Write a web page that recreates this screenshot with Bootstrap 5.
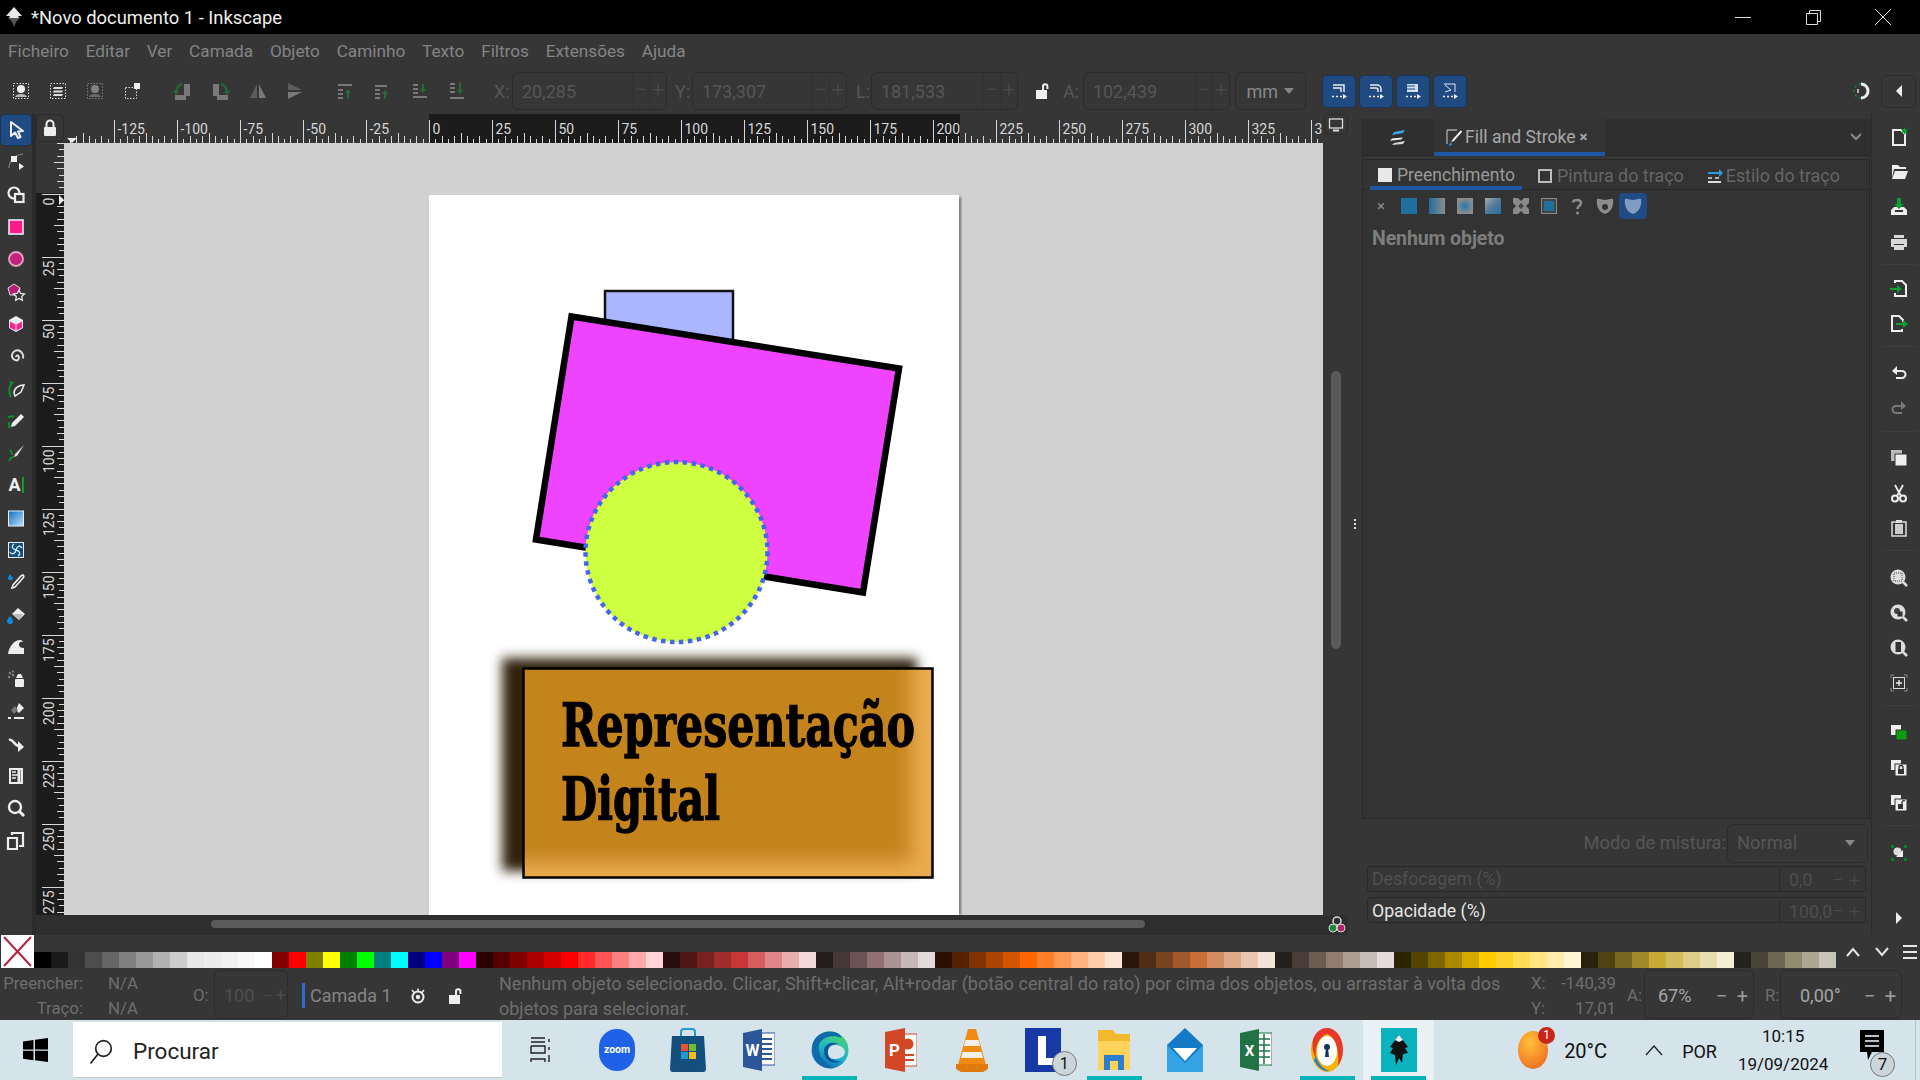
<!DOCTYPE html>
<html lang="pt">
<head>
<meta charset="utf-8">
<title>Inkscape</title>
<link href="https://cdn.jsdelivr.net/npm/bootstrap@5.3.0/dist/css/bootstrap.min.css" rel="stylesheet">
<style>
html,body{margin:0;height:1080px;width:1920px;overflow:hidden}
body{font-family:Roboto,"Liberation Sans",sans-serif;font-size:16px;background:#363636;color:#8a8a8a}
svg{display:block;flex:none}
.ic{width:20px;height:20px}
.titlebar{height:34px;background:#000;color:#eee;padding-left:4px}
.titlebar .logo{width:20px;height:22px;margin-right:7px}
.ttl{font-size:18.4px;padding-top:1px}
.winctl{width:70px;display:flex;justify-content:center}
.winbox{padding-right:2px}
.menubar{height:34px;padding:3px 0 0 8px;gap:16.8px;font-size:17.2px;color:#848484;border-bottom:1px solid #333}
.toolbar{height:46px;padding-left:2px;color:#565656}
.tslot{width:37.4px;display:flex;justify-content:center}
.gp{margin-left:12.6px}
.dim{opacity:.4}
.spinb{display:flex;align-items:center;border:1px solid #2b2b2b;border-radius:6px;height:38px;padding-left:9px;color:#565656;font-size:18px;position:relative}
.spinb .v{flex:1}
.spinb .pm{display:flex;height:100%;align-items:center;color:#4b4b4b;font-size:22px;font-weight:300}
.spinb .pm span{width:17px;text-align:center;border-left:1px solid #313131;height:100%;line-height:34px}
.lb{font-size:18px}
.ml-x{margin-left:18px;width:18px}
.w155{width:155px}.w147{width:147px}.w155b{width:155px}.w147b{width:147px}
.ml-y{margin-left:8px;width:17px}
.ml-l{margin-left:9px;width:15px}
.w71{width:71px;margin-left:5px;justify-content:center;padding:0;gap:6px;color:#888;font-size:18px}
.caretd{width:0;height:0;border-left:5px solid transparent;border-right:5px solid transparent;border-top:6px solid #888}
.lockslot{width:20px;margin-left:14px;margin-right:11px}
.ml-a{width:20px}
.bluebtn{width:34px;height:33px;background:#1f4a82;border:1px solid #183458;border-radius:5px;display:flex;align-items:center;justify-content:center;margin-right:3px}
.bluefirst{margin-left:16px}
.snap{margin-left:auto;margin-right:10px}
.caretbtn{width:35px;height:33px;border:1px solid #2b2b2b;border-radius:5px;display:flex;align-items:center;justify-content:center;margin-right:4px}
.workspace{height:821px}
.toolbox{width:32px}
.tbi{height:32.3px;display:flex;align-items:center;justify-content:center;position:relative}
.tbi-on{background:#1f4a82;border-radius:5px;border:1px solid #183458}
.tbA{color:#eee;font-weight:700;font-size:18px;line-height:20px}
.tbAbar{width:2px;height:16px;background:#0d9c2e;margin-left:1px}
.vsep{width:4px;background:#2b2b2b}
.canvascol{width:1312px;display:flex;flex-direction:column}
.rulertop{height:29px;position:relative}
.lockbtn{width:28px;height:28px;border:1px solid #2b2b2b;border-radius:5px;display:flex;align-items:center;justify-content:center}
.canvasrow{height:772px}
.hbar{height:20px;background:#2e2e2e;position:relative}
.hthumb{position:absolute;left:175px;top:5px;width:934px;height:8px;background:#5a5a5a;border-radius:4px}
.cm{position:absolute;right:1px;top:0}
.rightgut{width:25px;position:relative}
.vthumb{width:10px;height:278px;background:#5a5a5a;border-radius:5px;margin:228px 0 0 8px}
.desk{position:absolute;left:1288px;top:0;width:24px;height:21px;background:#363636;border:1px solid #2b2b2b;border-radius:4px;display:flex;align-items:center;justify-content:center}
.midgut{width:13px;display:flex;justify-content:center;padding-top:388px;color:#ddd}
.grip{display:flex;flex-direction:column;gap:2px;margin-top:17px}
.grip i{display:block;width:2px;height:2px;background:#ddd}
.dock{width:510px;padding-top:5px}
.docktabs{height:37px;background:#2f2f2f;border-bottom:1px solid #262626}
.dtab1{width:73px;display:flex;justify-content:center;align-items:center}
.dtab2{width:171px;display:flex;align-items:center;gap:1px;padding:3px 0 0 10px;background:#343434;border-bottom:4px solid #1f55a5;color:#a8a8a8;font-size:17.6px;margin-bottom:-1px}
.dx{font-size:15px;font-weight:700;margin-left:3px;color:#aaa}
.chev{margin-left:auto;margin-right:8px}
.nbk{height:660px;margin:3px 1px 0 1px;border:1px solid #282828;background:#333}
.subtabs{height:30px;border-bottom:1px solid #282828;padding-left:7px;font-size:17.9px;color:#666}
.stab{display:flex;align-items:center;gap:5px;height:30px;margin-right:21px;padding-top:2px}
.stab-on{width:152px;padding-left:8px;border-bottom:4px solid #1f55a5;color:#9a9a9a;margin-right:16px;font-size:17.5px;padding-top:4px}
.stab-s{gap:1px}
.sq{width:14px;height:14px;flex:none}
.sq-fill{background:#e8e8e8}
.sq-line{border:2px solid #bbb}
.paintrow{height:26px;margin-top:3px;padding-left:4px}
.pb{width:28px;height:26px;display:flex;align-items:center;justify-content:center;border-radius:4px;font-size:15px}
.pb-on{background:#1f4a82}
.pb .sw{width:16px;height:16px;display:block}
.pw1{background:#1f6f9f}
.none-lbl{margin:8px 0 0 9px;font-weight:700;color:#7d7d7d;font-size:19.5px;line-height:24px;letter-spacing:-.1px}
.blendrow{height:39px;margin:4px 3px 0 0;color:#565656;font-size:18.3px;justify-content:flex-end;padding-top:1px}
.sel{width:141px;height:39px;border:1px solid #2b2b2b;border-radius:6px;margin-left:1px;padding:0 12px 0 9px;display:flex;align-items:center;justify-content:space-between}
.scale{height:26px;margin:4px 5px 0 6px;border:1px solid #282828;border-radius:3px;display:flex;align-items:center;padding:1px 0 0 4px;font-size:17.7px;color:#505050}
.scale-w{color:#e6e6e6;margin-top:5px;padding-top:2px}
.scale .nm{width:407px}
.scale .vl{width:50px;padding-left:9px;border-left:1px solid #282828;height:100%;line-height:24px;color:#4e4e4e}
.scale .pm2{color:#4a4a4a;font-size:20px;display:flex;font-weight:300}
.scale .pm2 span{width:17px;text-align:center;line-height:24px}
.cmdbar{width:49px;padding:5.5px 0 0 5px;display:flex;flex-direction:column;align-items:center;border-left:1px solid #2c2c2c}
.cbi{height:35px;display:flex;align-items:center;justify-content:center}
.cbsep{height:15px;width:36px;position:relative}
.cbsep-s{height:11.3px}
.cbsep::after{content:"";position:absolute;left:0;right:0;top:5px;border-top:1px solid #3e3e3e}
.cbcaret{margin-top:30px}
.palette{height:33px;align-items:flex-end}
.nocol{width:33px;height:33px;margin-left:1px;flex:none}
.swatches{display:flex}
.swatch{width:17px;height:16px}
.palctl{margin-left:auto;display:flex;align-items:center;gap:13px;height:33px;padding-right:3px;align-self:flex-end}
.status{height:52px;color:#6e6e6e;font-size:16.8px;padding-top:3px}
.two{height:50px;line-height:25px}
.fillb{width:160px}
.fillb .rowf{display:flex}
.fillb b{font-weight:400;width:83px;text-align:right;margin-right:25px}
.olab{margin-left:33px;width:21px}
.ospin{width:74px;height:49px;margin-top:-3px;border:1px solid #2b2b2b;border-radius:6px;display:flex;align-items:center;padding:3px 0 0 9px;color:#505050;font-size:18px}
.ospin .pm3{display:flex;color:#4a4a4a;font-size:18px}
.ospin .pm3 span{width:13px;text-align:center}
.ospin .vv{flex:1}
.laybar{width:3px;height:25px;background:#2f6bd1;margin-left:14px}
.laynm{margin-left:5px;width:79px;color:#858585;font-size:18px;white-space:nowrap}
.eyes{margin-left:19px}
.lock2{margin-left:17px}
.msg{margin-left:34px;width:1010px;white-space:nowrap;font-size:18px}
.xy{margin-left:22px;width:85px}
.xy .rowf{display:flex;justify-content:space-between}
.alab{margin-left:11px;width:17px}
.zspin{width:110px;height:49px;margin-top:-3px;border:1px solid #2b2b2b;border-radius:6px;display:flex;align-items:center;padding:3px 0 0 13px;color:#a6a6a6;font-size:18px}
.zspin .vv{flex:1}
.zspin .pm3{display:flex;color:#9a9a9a;font-size:20px}
.zspin .pm3 span{width:21px;text-align:center}
.rlab{margin-left:11px;width:15px}
.rspin{width:122px;padding-left:19px}
.taskbar{height:60px;background:#d5e3eb;color:#111;padding-left:23px;position:relative}
.srch{width:429px;height:56px;background:#fff;margin-left:25px;display:flex;align-items:center;padding:5px 0 0 16px;gap:20px;font-size:22.5px;color:#222;border-bottom:1px solid #c9c9c9}
.tview{margin-left:22px;width:36px;display:flex;justify-content:center}
.slots{display:flex;margin-left:21px}
.tk{width:71.1px;height:60px;display:flex;align-items:center;justify-content:center;position:relative}
.tk-line::after{content:"";position:absolute;left:8px;right:8px;bottom:0;height:4px;background:#06b3b6}
.tk-on{background:#e9f1f5}
.wth{margin-left:84px;position:relative;width:34px;height:40px}
.wthb{position:absolute;right:-3px;top:-3px;width:17px;height:17px;border-radius:50%;background:#c9261a;color:#fff;font-size:12px;text-align:center;line-height:17px}
.temp{margin-left:12px;width:43px;font-size:20px;white-space:nowrap;padding-top:2px}
.upc{margin-left:37px}
.por{margin-left:18px;width:36px;font-size:18px;padding-top:2px}
.clk{margin-left:15px;width:100px;text-align:center;font-size:17px;line-height:28px}
.ntf{margin-left:20px;width:38px;height:50px;position:relative;display:flex;justify-content:center;padding-top:5px}
.cnt{position:absolute;width:25px;height:25px;border-radius:50%;border:1px solid #777;background:#ccd5da;color:#111;text-align:center;line-height:23px;font-size:17px;right:-4px;bottom:-2px}
.cntL{right:2px;bottom:4px;font-size:16px}
.edge{position:absolute;right:4px;top:0;bottom:0;border-left:1px solid #b5c3cb}
</style>
</head>
<body class="d-flex flex-column">

<div class="titlebar d-flex align-items-center">
  <svg class="logo" viewBox="0 0 20 22"><path d="M10 1 L2 10 H6 L5 12 H15 L14 10 H18 Z" fill="#e8e8e8"/><path d="M4 12 H16 L12 16 L10 21 L8 16 Z" fill="#555"/></svg>
  <span class="ttl">*Novo documento 1 - Inkscape</span>
  <div class="ms-auto d-flex winbox">
    <div class="winctl"><svg class="ic" viewBox="0 0 20 20"><path d="M2 10.5H18" stroke="#ddd"/></svg></div>
    <div class="winctl"><svg class="ic" viewBox="0 0 20 20"><path d="M3.5 6.5H14.5V17.5H3.5Z M6.5 6V3.5H17.5V14.5H15" fill="none" stroke="#ddd"/></svg></div>
    <div class="winctl"><svg class="ic" viewBox="0 0 20 20"><path d="M2 2 18 18M18 2 2 18" stroke="#ddd"/></svg></div>
  </div>
</div>

<nav class="menubar d-flex align-items-center">
  <span>Ficheiro</span><span>Editar</span><span>Ver</span><span>Camada</span><span>Objeto</span><span>Caminho</span><span>Texto</span><span>Filtros</span><span>Extensões</span><span>Ajuda</span>
</nav>

<div class="toolbar d-flex align-items-center">
  <div class="tslot"><svg class="ic" viewBox="0 0 20 20"><rect x="2.5" y="2.5" width="15" height="15" fill="none" stroke="#ddd" stroke-dasharray="1.5 1.5"/><circle cx="10" cy="8" r="4" fill="#eee"/><path d="M4 16c1-4 11-4 12 0z" fill="#bbb"/></svg></div>
  <div class="tslot"><svg class="ic" viewBox="0 0 20 20"><rect x="2.5" y="2.5" width="15" height="15" fill="none" stroke="#ddd" stroke-dasharray="1.5 1.5"/><path d="M6 6H15L14 8H5ZM6 9.5H15L14 11.5H5ZM6 13H15L14 15H5Z" fill="#ddd"/></svg></div>
  <div class="tslot dim"><svg class="ic" viewBox="0 0 20 20"><rect x="2.5" y="2.5" width="15" height="15" fill="none" stroke="#ddd" stroke-dasharray="1.5 1.5"/><circle cx="10" cy="8" r="4" fill="#eee"/><path d="M4 16c1-4 11-4 12 0z" fill="#bbb"/></svg></div>
  <div class="tslot"><svg class="ic" viewBox="0 0 20 20"><rect x="2.5" y="6.5" width="11" height="11" fill="none" stroke="#ddd" stroke-dasharray="1.5 1.5"/><rect x="11" y="2" width="6" height="6" fill="#eee"/></svg></div>
  <div class="tslot gp dim"><svg class="ic" viewBox="0 0 20 20"><rect x="11" y="3" width="6" height="12" fill="#ddd"/><rect x="2" y="14" width="11" height="5" fill="#ddd"/><path d="M9 3C5 4 3 7 3 12" fill="none" stroke="#0fbe3a" stroke-width="2"/><path d="M0 10h6l-3 4z" fill="#0fbe3a"/></svg></div>
  <div class="tslot dim"><svg class="ic" viewBox="0 0 20 20"><rect x="3" y="3" width="6" height="12" fill="#ddd"/><rect x="7" y="14" width="11" height="5" fill="#ddd"/><path d="M11 3C15 4 17 7 17 12" fill="none" stroke="#0fbe3a" stroke-width="2"/><path d="M14 10h6l-3 4z" fill="#0fbe3a"/></svg></div>
  <div class="tslot dim"><svg class="ic" viewBox="0 0 20 20"><path d="M9 3V17H2Z" fill="#999"/><path d="M11 3V17H18Z" fill="#ddd"/></svg></div>
  <div class="tslot dim"><svg class="ic" viewBox="0 0 20 20"><path d="M3 2 17 9H3Z" fill="#999"/><path d="M3 11H17L3 18Z" fill="#ddd"/></svg></div>
  <div class="tslot gp dim"><svg class="ic" viewBox="0 0 20 20"><path d="M3 3H17V5H3ZM3 8H8V10H3ZM3 12H8V14H3ZM3 16H8V18H3Z" fill="#ddd"/><path d="M13 8l3 4h-2v6h-2v-6h-2z" fill="#0fbe3a"/></svg></div>
  <div class="tslot dim"><svg class="ic" viewBox="0 0 20 20"><path d="M3 4H15V6H3ZM3 8H8V10H3ZM3 12H8V14H3ZM3 16H8V18H3Z" fill="#ddd"/><path d="M13 9l3 4h-2v5h-2v-5h-2z" fill="#0fbe3a"/></svg></div>
  <div class="tslot dim"><svg class="ic" viewBox="0 0 20 20"><path d="M3 3H8V5H3ZM3 7H8V9H3ZM3 11H8V13H3ZM3 15H17V17H3Z" fill="#ddd"/><path d="M12 3h2v5h2l-3 4-3-4h2z" fill="#0fbe3a"/></svg></div>
  <div class="tslot dim"><svg class="ic" viewBox="0 0 20 20"><path d="M3 2H8V4H3ZM3 6H8V8H3ZM3 10H8V12H3ZM3 16H17V18H3Z" fill="#ddd"/><path d="M12 2h2v7h2l-3 4-3-4h2z" fill="#0fbe3a"/></svg></div>

  <span class="lb ml-x">X:</span>
  <div class="spinb w155"><span class="v">20,285</span><span class="pm"><span>−</span><span>+</span></span></div>
  <span class="lb ml-y">Y:</span>
  <div class="spinb w155b"><span class="v">173,307</span><span class="pm"><span>−</span><span>+</span></span></div>
  <span class="lb ml-l">L:</span>
  <div class="spinb w147"><span class="v">181,533</span><span class="pm"><span>−</span><span>+</span></span></div>
  <div class="lockslot"><svg class="ic" viewBox="0 0 20 20"><rect x="4" y="9" width="11" height="9" fill="#eee"/><path d="M11 9V5.5a2.2 2.2 0 0 1 4.4 0V8" fill="none" stroke="#eee" stroke-width="2"/></svg></div>
  <span class="lb ml-a">A:</span>
  <div class="spinb w147b"><span class="v">102,439</span><span class="pm"><span>−</span><span>+</span></span></div>
  <div class="spinb w71"><span>mm</span><span class="caretd"></span></div>
  <div class="bluebtn bluefirst"><svg class="ic" viewBox="0 0 20 20"><path d="M4 4H15V11M4 7H12V11" fill="none" stroke="#eee" stroke-width="1.5"/><path d="M3 15.5H5M7 15.5H9M11 15.5H13" stroke="#eee" stroke-width="1.4"/><path d="M14 13l4 2.5-4 2.5z" fill="#eee"/></svg></div>
  <div class="bluebtn"><svg class="ic" viewBox="0 0 20 20"><path d="M4 4H11A4 4 0 0 1 15 8V11M4 7H10A2 2 0 0 1 12 9V11" fill="none" stroke="#eee" stroke-width="1.5"/><path d="M3 15.5H5M7 15.5H9M11 15.5H13" stroke="#eee" stroke-width="1.4"/><path d="M14 13l4 2.5-4 2.5z" fill="#eee"/></svg></div>
  <div class="bluebtn"><svg class="ic" viewBox="0 0 20 20"><rect x="4" y="3" width="11" height="8" fill="#cfe0f5"/><path d="M4 5H12M4 8H12" stroke="#1f4a82"/><path d="M3 15.5H5M7 15.5H9M11 15.5H13" stroke="#eee" stroke-width="1.4"/><path d="M14 13l4 2.5-4 2.5z" fill="#eee"/></svg></div>
  <div class="bluebtn"><svg class="ic" viewBox="0 0 20 20"><path d="M4 3H15V11M5 4L11 9L5 11" fill="none" stroke="#dfe8f5"/><path d="M3 15.5H5M7 15.5H9M11 15.5H13" stroke="#eee" stroke-width="1.4"/><path d="M14 13l4 2.5-4 2.5z" fill="#eee"/></svg></div>
  <div class="snap"><svg class="ic" viewBox="0 0 20 20"><path d="M10 3a7 7 0 0 1 0 14" fill="none" stroke="#eee" stroke-width="3"/><path d="M10 3a7 7 0 0 0-7 7a7 7 0 0 0 7 7" fill="none" stroke="#1a8a3a" stroke-width="1.5" stroke-dasharray="2 3"/><path d="M7 8v4" stroke="#ddd" stroke-width="1.5"/></svg></div>
  <div class="caretbtn"><svg width="10" height="14" viewBox="0 0 10 14"><path d="M8 1V13L2 7Z" fill="#eee"/></svg></div>
</div>

<div class="workspace d-flex">
  <div class="toolbox">
    <div class="tbi tbi-on"><svg class="ic" viewBox="0 0 20 20"><path d="M5 2V16L9 12.5 12 18 14.5 17 12 11.5 17 11Z" fill="none" stroke="#eee" stroke-width="2" stroke-linejoin="round"/></svg></div>
    <div class="tbi"><svg class="ic" viewBox="0 0 20 20"><path d="M3 16C3 9 8 3 17 2" fill="none" stroke="#888"/><rect x="5" y="4" width="6" height="6" fill="#eee"/><path d="M13 11l5 3.5-5 3.5z" fill="#eee"/></svg></div>
    <div class="tbi"><svg class="ic" viewBox="0 0 20 20"><circle cx="8" cy="8" r="5.5" fill="none" stroke="#eee" stroke-width="2.2"/><rect x="9" y="9" width="8.5" height="8" fill="#363636" stroke="#eee" stroke-width="2.2"/></svg></div>
    <div class="tbi"><svg class="ic" viewBox="0 0 20 20"><rect x="3" y="3" width="14" height="14" fill="#ff1a8c" stroke="#eee" stroke-width="1.6"/></svg></div>
    <div class="tbi"><svg class="ic" viewBox="0 0 20 20"><circle cx="10" cy="10" r="7" fill="#c4227c" stroke="#e9a7c8" stroke-width="1.8"/></svg></div>
    <div class="tbi"><svg class="ic" viewBox="0 0 20 20"><path d="M8 2 14 6 12 13H4L2 6Z" fill="#b71f77" stroke="#ddd"/><path d="M13 8l1.7 3.4 3.8.5-2.8 2.6.7 3.8-3.4-1.8-3.4 1.8.7-3.8-2.8-2.6 3.8-.5z" fill="#363636" stroke="#eee" stroke-width="1.2"/></svg></div>
    <div class="tbi"><svg class="ic" viewBox="0 0 20 20"><path d="M10 2 17 6V14L10 18 3 14V6Z" fill="#eee"/><path d="M4 7.5 9.5 10.5V16.5L4 13.5Z M10.5 10.5 16 7.5V13.5L10.5 16.5Z" fill="#ff1f92"/></svg></div>
    <div class="tbi"><svg class="ic" viewBox="0 0 20 20"><path d="M10 11a1.5 1.5 0 0 1 2-1.500a3 3 0 0 1-1 5a5 5 0 0 1-5-6a6 6 0 0 1 7-4a7 7 0 0 1 4 8" fill="none" stroke="#ddd" stroke-width="2"/></svg></div>
    <div class="tbi"><svg class="ic" viewBox="0 0 20 20"><path d="M8 14C8 9 13 6 18 6L15 13 9 17Z" fill="none" stroke="#eee" stroke-width="1.5"/><path d="M5 18C2 13 3 7 7 3" fill="none" stroke="#0f8f2f" stroke-width="2"/><path d="M3 2l3 1-1 3z" fill="#0f8f2f"/></svg></div>
    <div class="tbi"><svg class="ic" viewBox="0 0 20 20"><path d="M15 3l3 3-9 9-4 1 1-4z" fill="#eee"/><path d="M2 6C5 5 6 6 8 5M3 17C4 15 3 13 3 11" fill="none" stroke="#0f8f2f" stroke-width="2.2"/></svg></div>
    <div class="tbi"><svg class="ic" viewBox="0 0 20 20"><path d="M18 2 9 11 8 14 11 13Z" fill="#ddd"/><path d="M4 7c2 2 1 4 3 4M3 18c1-3 3-4 5-4" fill="none" stroke="#0f8f2f" stroke-width="2"/></svg></div>
    <div class="tbi"><span class="tbA">A</span><span class="tbAbar"></span></div>
    <div class="tbi"><svg class="ic" viewBox="0 0 20 20"><defs><linearGradient id="gr1" x1="0" y1="0" x2="1" y2="1"><stop offset="0" stop-color="#0b6fc0"/><stop offset="1" stop-color="#bfe3fb"/></linearGradient></defs><rect x="2.500" y="3" width="15" height="15" fill="url(#gr1)" stroke="#eee"/></svg></div>
    <div class="tbi"><svg class="ic" viewBox="0 0 20 20"><rect x="2.500" y="2.500" width="15" height="15" fill="#164f7a" stroke="#eee"/><path d="M10 10C6 9 5 6 8 4M10 10C11 6 14 5 16 8M10 10C14 11 15 14 12 16M10 10C9 14 6 15 4 12" fill="none" stroke="#cfeeff" stroke-width="1.300"/></svg></div>
    <div class="tbi"><svg class="ic" viewBox="0 0 20 20"><path d="M17 3a1.800 1.800 0 0 1 0 3l-8 9-3 1 1-3 8-9z" fill="#363636" stroke="#eee" stroke-width="1.600"/><path d="M4 2C5 4 7 5 7 7A3 3 0 0 1 2 7C2 5 3 4 4 2Z" fill="#0b8ae0"/></svg></div>
    <div class="tbi"><svg class="ic" viewBox="0 0 20 20"><path d="M12 3l7 6-6 6-7-6z" fill="#eee"/><path d="M7 9h10l-4 6z" fill="#bbb"/><path d="M4 11C5 13 7 14 7 16A3 3 0 0 1 1 16C1 14 3 13 4 11Z" fill="#0b8ae0"/></svg></div>
    <div class="tbi"><svg class="ic" viewBox="0 0 20 20"><path d="M2 17C3 10 8 3 14 3C16 3 17 4 17 5C14 4 13 6 13 8C13 10 15 11 18 11V17Z" fill="#eee"/></svg></div>
    <div class="tbi"><svg class="ic" viewBox="0 0 20 20"><rect x="9" y="10" width="9" height="8" rx="1" fill="#eee"/><path d="M12 5h3l2 4h-7z" fill="#eee"/><circle cx="4" cy="4" r="1.200" fill="#888"/><circle cx="7" cy="6" r="1.200" fill="#888"/><circle cx="3" cy="8" r="1.200" fill="#888"/><circle cx="7" cy="2.500" r="1" fill="#888"/></svg></div>
    <div class="tbi"><svg class="ic" viewBox="0 0 20 20"><path d="M13 2l5 5-5 5-3-3z" fill="#eee"/><path d="M9 5 5 9l3 4 4-4z" fill="#777"/><path d="M2 17H5M8 17H18" stroke="#eee" stroke-width="1.800"/></svg></div>
    <div class="tbi"><svg class="ic" viewBox="0 0 20 20"><path d="M3 6C7 4 8 12 13 12" fill="none" stroke="#eee" stroke-width="2.500"/><path d="M12 7l6 6-6 5z" fill="#eee"/></svg></div>
    <div class="tbi"><svg class="ic" viewBox="0 0 20 20"><path d="M4 3H16V17H4Z" fill="none" stroke="#eee" stroke-width="2"/><path d="M6 6H10M6 9H12M6 12H10" stroke="#eee" stroke-width="1.500"/><path d="M13 4V16" stroke="#eee" stroke-width="3"/></svg></div>
    <div class="tbi"><svg class="ic" viewBox="0 0 20 20"><circle cx="9" cy="9" r="6" fill="none" stroke="#eee" stroke-width="2.400"/><path d="M13 13l5 5" stroke="#eee" stroke-width="3"/></svg></div>
    <div class="tbi"><svg class="ic" viewBox="0 0 20 20"><path d="M2 7H11V18H2Z" fill="none" stroke="#eee" stroke-width="2.200"/><path d="M6 4V2H17V15H13" fill="none" stroke="#eee" stroke-width="2.200"/></svg></div>
  </div>
  <div class="vsep"></div>
  <div class="canvascol">
    <div class="rulertop d-flex">
      <div class="lockbtn"><svg class="ic" viewBox="0 0 20 20"><rect x="4" y="9" width="12" height="9" rx="1" fill="#eee"/><path d="M6.500 9V6a3.500 3.500 0 0 1 7 0V9" fill="none" stroke="#eee" stroke-width="2"/></svg></div>
      <svg id="rtop" width="1284" height="29" viewBox="64 114 1284 29" class="flex-grow-0"></svg>
      <div class="desk"><svg width="16" height="14" viewBox="0 0 16 14"><rect x="1.500" y="1" width="13" height="9" fill="none" stroke="#ddd" stroke-width="1.300"/><path d="M5 12.500H11" stroke="#ddd" stroke-width="2"/></svg></div>
    </div>
    <div class="canvasrow d-flex">
      <svg id="rleft" width="28" height="772" viewBox="36 143 28 772"></svg>
      <svg width="1259" height="772" viewBox="64 143 1259 772" role="img" aria-label="Desenho">
        <defs>
          <filter id="bl5" x="-10%" y="-10%" width="120%" height="120%"><feGaussianBlur stdDeviation="6"/></filter>
          <filter id="bl8" x="-10%" y="-10%" width="120%" height="120%"><feGaussianBlur stdDeviation="9"/></filter>
          <filter id="bl2" x="-10%" y="-10%" width="120%" height="120%"><feGaussianBlur stdDeviation="1.500"/></filter>
          <clipPath id="oc"><rect x="523" y="668" width="410" height="210"/></clipPath>
        </defs>
        <rect x="64" y="143" width="1259" height="772" fill="#d1d1d1"/>
        <rect x="958" y="197" width="3" height="718" fill="#666" filter="url(#bl2)"/>
        <rect x="429" y="195" width="530" height="720" fill="#fff"/>
        <rect x="605" y="291" width="128" height="60" fill="#aab6ff" stroke="#111" stroke-width="2.500"/>
        <path d="M571.500 316.500 899 368.500 863 592.500 536 539.500Z" fill="#ee44ff" stroke="#000" stroke-width="6.500"/>
        <ellipse cx="676.500" cy="552" rx="91" ry="90" fill="#ceff41" stroke="#4466ee" stroke-width="4.500" stroke-dasharray="4.500 4.500"/>
        <rect x="502" y="658" width="415" height="213" fill="#33210a" filter="url(#bl5)"/>
        <g clip-path="url(#oc)">
          <rect x="523" y="668" width="410" height="210" fill="#eaab50"/>
          <rect x="480" y="630" width="431" height="232" fill="#c5831e" filter="url(#bl8)"/>
        </g>
        <rect x="523.500" y="668.500" width="409" height="209" fill="none" stroke="#000" stroke-width="2.500"/>
        <text x="561" y="746" font-family="DejaVu Serif" font-weight="700" font-size="60" textLength="354" lengthAdjust="spacingAndGlyphs" stroke="#000" stroke-width="1.300">Representação</text>
        <text x="561" y="820" font-family="DejaVu Serif" font-weight="700" font-size="60" textLength="159" lengthAdjust="spacingAndGlyphs" stroke="#000" stroke-width="1.300">Digital</text>
      </svg>
      <div class="rightgut"><div class="vthumb"></div></div>
    </div>
    <div class="hbar"><div class="hthumb"></div><div class="cm"><svg class="ic" viewBox="0 0 20 20"><circle cx="10" cy="6" r="4" fill="none" stroke="#ddd" stroke-width="1.500"/><circle cx="6" cy="13" r="4" fill="#1a8a3a" stroke="#ddd"/><circle cx="14" cy="13" r="4" fill="#b3246f" stroke="#ddd"/></svg></div></div>
  </div>
  <div class="midgut"><div class="grip"><i></i><i></i><i></i></div></div>
  <div class="dock">
    <div class="docktabs d-flex">
      <div class="dtab1"><svg class="ic" viewBox="0 0 20 20"><path d="M6 5 17 3 15 6 4 8Z" fill="#3aa7e8"/><path d="M4 11H15L13 13H2Z" fill="#eee" transform="rotate(-6 9 12)"/><path d="M6 16 17 14 15 17 4 18Z" fill="#d5d5d5"/></svg></div>
      <div class="dtab2"><svg class="ic" viewBox="0 0 20 20"><path d="M3 3H13M3 3V17" stroke="#aaa" stroke-width="1.300" fill="none"/><path d="M17 3 9 12 7 15 10 14 18 5Z" fill="#eee"/><path d="M7 15 4 19 8 18Z" fill="#2a8bd6"/></svg><span>Fill and Stroke</span><span class="dx">×</span></div>
      <div class="chev align-self-center"><svg width="14" height="10" viewBox="0 0 14 10"><path d="M2 2 7 7 12 2" fill="none" stroke="#8a8a8a" stroke-width="2"/></svg></div>
    </div>
    <div class="nbk">
      <div class="subtabs d-flex">
        <div class="stab stab-on"><span class="sq sq-fill"></span><span>Preenchimento</span></div>
        <div class="stab"><span class="sq sq-line"></span><span>Pintura do traço</span></div>
        <div class="stab stab-s"><svg class="ic" viewBox="0 0 20 20"><path d="M3 7H15" stroke="#2a9be0" stroke-width="2"/><path d="M14 3l4 4-4 4z" fill="#2a9be0"/><path d="M3 12H7M10 12H14" stroke="#ddd" stroke-width="1.500"/><path d="M3 16H16" stroke="#ddd" stroke-width="2"/></svg><span>Estilo do traço</span></div>
      </div>
      <div class="paintrow d-flex">
        <div class="pb">×</div>
        <div class="pb"><span class="sw pw1"></span></div>
        <div class="pb"><svg class="sw" viewBox="0 0 16 16"><defs><linearGradient id="g2"><stop offset="0" stop-color="#1f6f9f"/><stop offset="1" stop-color="#8d8d8d"/></linearGradient></defs><rect width="16" height="16" fill="url(#g2)"/></svg></div>
        <div class="pb"><svg class="sw" viewBox="0 0 16 16"><defs><radialGradient id="g3"><stop offset="0" stop-color="#1f7ab0"/><stop offset="1" stop-color="#8d8d8d"/></radialGradient></defs><rect width="16" height="16" fill="url(#g3)"/></svg></div>
        <div class="pb"><svg class="sw" viewBox="0 0 16 16"><defs><linearGradient id="g4" x1="0" y1="0" x2="1" y2="1"><stop offset="0" stop-color="#aaa"/><stop offset=".5" stop-color="#557a99"/><stop offset="1" stop-color="#1f6f9f"/></linearGradient></defs><rect width="16" height="16" fill="url(#g4)"/></svg></div>
        <div class="pb"><svg class="sw" viewBox="0 0 16 16"><path d="M0 0H5L8 3 11 0H16V5L13 8 16 11V16H11L8 13 5 16H0V11L3 8 0 5Z" fill="#8a8a8a"/><path d="M8 5l3 3-3 3-3-3z" fill="#444"/></svg></div>
        <div class="pb"><svg class="sw" viewBox="0 0 16 16"><rect x=".5" y=".5" width="15" height="15" fill="#444" stroke="#8a8a8a"/><rect x="3" y="3" width="10" height="10" fill="#1f6f9f"/></svg></div>
        <div class="pb"><svg class="ic" viewBox="0 0 20 20"><path d="M6 6.500C6 3 14 3 14 7C14 10 10.500 9.500 10.500 13" fill="none" stroke="#8d8d8d" stroke-width="2.600"/><circle cx="10.500" cy="17" r="1.600" fill="#8d8d8d"/></svg></div>
        <div class="pb"><svg class="ic" viewBox="0 0 20 20"><path fill-rule="evenodd" d="M2 3C4 2 8 4 10 4S16 2 18 3C19 8 17 16 10 18C3 16 1 8 2 3ZM10 8A3 3 0 0 0 7 11A3 3 0 0 0 13 11A3 3 0 0 0 10 8Z" fill="#8d8d8d"/></svg></div>
        <div class="pb pb-on"><svg class="ic" viewBox="0 0 20 20"><path d="M2 3C4 2 8 4 10 4S16 2 18 3C19 8 17 16 10 18C3 16 1 8 2 3Z" fill="#7f9cc4"/></svg></div>
      </div>
      <div class="none-lbl">Nenhum objeto</div>
    </div>
    <div class="blendrow d-flex align-items-center"><span>Modo de mistura:</span><div class="sel"><span>Normal</span><span class="caretd"></span></div></div>
    <div class="scale"><span class="nm">Desfocagem (%)</span><span class="vl">0,0</span><span class="pm2"><span>−</span><span>+</span></span></div>
    <div class="scale scale-w"><span class="nm">Opacidade (%)</span><span class="vl">100,0</span><span class="pm2"><span>−</span><span>+</span></span></div>
  </div>
  <div class="cmdbar">
    <div class="cbi"><svg class="ic" viewBox="0 0 20 20"><path d="M4 3H12L16 7V18H4Z" fill="#333" stroke="#eee" stroke-width="2"/><path d="M15.500 0l1 2.500 2.500-.500-1.500 2 1.500 2-2.500-.500-1 2.500-1-2.500-2.500.500 1.500-2-1.500-2 2.500.500z" fill="#0c9e30"/></svg></div>
    <div class="cbi"><svg class="ic" viewBox="0 0 20 20"><path d="M3 3H9L11 5H17V7H5L3 16Z" fill="#eee"/><path d="M6 9H19L16 17H3Z" fill="#eee"/></svg></div>
    <div class="cbi"><svg class="ic" viewBox="0 0 20 20"><path d="M2 13 5 10H15L18 13V18H2Z" fill="#eee"/><rect x="6" y="13" width="8" height="2" fill="#333"/><path d="M8 1h4v6h3l-5 5-5-5h3z" fill="#0c9e30"/></svg></div>
    <div class="cbi"><svg class="ic" viewBox="0 0 20 20"><path d="M5 3H15V6H5ZM2 7H18V15H15V12H5V15H2Z" fill="#d8d8d8"/><rect x="5" y="13" width="10" height="5" fill="#d8d8d8"/></svg></div>
    <div class="cbsep cbsep-s"></div>
    <div class="cbi"><svg class="ic" viewBox="0 0 20 20"><path d="M6 5V3H13L17 7V18H6V15" fill="none" stroke="#eee" stroke-width="2"/><path d="M1 10H8V7L13 11 8 15V12H1Z" fill="#0c9e30"/></svg></div>
    <div class="cbi"><svg class="ic" viewBox="0 0 20 20"><path d="M13 16V18H3V3H10L14 7V9" fill="none" stroke="#eee" stroke-width="2"/><path d="M7 10H14V7L19 11 14 15V12H7Z" fill="#0c9e30"/></svg></div>
    <div class="cbsep"></div>
    <div class="cbi"><svg class="ic" viewBox="0 0 20 20"><path d="M4 8H13A3.500 3.500 0 0 1 13 15H7" fill="none" stroke="#eee" stroke-width="2"/><path d="M8 3 3 8 8 12Z" fill="#eee"/></svg></div>
    <div class="cbi"><svg class="ic dim" viewBox="0 0 20 20"><path d="M16 8H7A3.500 3.500 0 0 0 7 15H13" fill="none" stroke="#ddd" stroke-width="2"/><path d="M12 3 17 8 12 12Z" fill="#ddd"/></svg></div>
    <div class="cbsep"></div>
    <div class="cbi"><svg class="ic" viewBox="0 0 20 20"><rect x="2" y="2" width="11" height="11" fill="#bbb"/><rect x="6" y="6" width="12" height="12" fill="#eee" stroke="#333"/></svg></div>
    <div class="cbi"><svg class="ic" viewBox="0 0 20 20"><path d="M6 2 12 13M14 2 8 13" stroke="#eee" stroke-width="1.800"/><circle cx="6" cy="15.500" r="3" fill="none" stroke="#eee" stroke-width="2"/><circle cx="14" cy="15.500" r="3" fill="none" stroke="#eee" stroke-width="2"/></svg></div>
    <div class="cbi"><svg class="ic" viewBox="0 0 20 20"><rect x="3" y="4" width="14" height="14" fill="none" stroke="#ddd" stroke-width="1.500"/><rect x="6" y="6" width="8" height="10" fill="#ccc"/><rect x="7" y="2" width="6" height="3" fill="#ddd"/></svg></div>
    <div class="cbsep"></div>
    <div class="cbi"><svg class="ic" viewBox="0 0 20 20"><circle cx="9" cy="9" r="7.500" fill="#ddd"/><rect x="5" y="5" width="8" height="8" fill="none" stroke="#444" stroke-dasharray="1 1"/><path d="M14 14l4 4" stroke="#ddd" stroke-width="2.500"/></svg></div>
    <div class="cbi"><svg class="ic" viewBox="0 0 20 20"><circle cx="9" cy="9" r="7.500" fill="#ddd"/><circle cx="8" cy="8" r="3" fill="#444"/><rect x="8.500" y="8.500" width="5" height="5" fill="#333"/><path d="M14 14l4 4" stroke="#ddd" stroke-width="2.500"/></svg></div>
    <div class="cbi"><svg class="ic" viewBox="0 0 20 20"><circle cx="9" cy="9" r="7.500" fill="#ddd"/><rect x="6" y="3.500" width="6.500" height="11" fill="#333" stroke="#ddd"/><path d="M14 14l4 4" stroke="#ddd" stroke-width="2.500"/></svg></div>
    <div class="cbi"><svg class="ic" viewBox="0 0 20 20"><path d="M2 5V2H5M15 2H18V5M2 15V18H5M15 18H18V15" fill="none" stroke="#888"/><rect x="4.500" y="4.500" width="11" height="11" fill="none" stroke="#ddd"/><path d="M10 7V13M7 10H13" stroke="#eee" stroke-width="1.300"/></svg></div>
    <div class="cbsep"></div>
    <div class="cbi"><svg class="ic" viewBox="0 0 20 20"><rect x="2" y="2" width="10" height="10" fill="#eee"/><rect x="7" y="7" width="11" height="10" fill="#0c9e10" stroke="#333"/></svg></div>
    <div class="cbi"><svg class="ic" viewBox="0 0 20 20"><rect x="2" y="2" width="10" height="10" fill="#eee"/><rect x="6" y="6" width="12" height="12" fill="#eee" stroke="#333"/><rect x="9" y="11" width="6" height="5" fill="#333"/><path d="M10 11V9.500a2 2 0 0 1 4 0V11" fill="none" stroke="#333" stroke-width="1.300"/></svg></div>
    <div class="cbi"><svg class="ic" viewBox="0 0 20 20"><rect x="2" y="2" width="10" height="10" fill="#eee"/><rect x="6" y="6" width="12" height="12" fill="#eee" stroke="#333"/><rect x="9" y="11" width="5" height="5" fill="#333"/><path d="M13 11V9.500a2 2 0 0 1 3 -1.500" fill="none" stroke="#333" stroke-width="1.300"/></svg></div>
    <div class="cbsep"></div>
    <div class="cbi"><svg class="ic" viewBox="0 0 20 20"><g fill="#0c7f2a"><rect x="2" y="2" width="3" height="3"/><rect x="15" y="2" width="3" height="3"/><rect x="2" y="15" width="3" height="3"/><rect x="15" y="15" width="3" height="3"/></g><circle cx="8.500" cy="8.500" r="4" fill="#ddd"/><path d="M14 7V14H7Z" fill="#eee"/></svg></div>
    <div class="cbi cbcaret"><svg width="10" height="14" viewBox="0 0 10 14"><path d="M2 1V13L8 7Z" fill="#eee"/></svg></div>
  </div>
</div>

<div class="palette d-flex">
  <svg class="nocol" viewBox="0 0 33 33"><rect width="33" height="33" fill="#fff"/><path d="M3 2 30 31M30 2 3 31" stroke="#b1243f" stroke-width="2"/></svg>
  <div class="swatches" id="swatches"></div>
  <div class="palctl">
    <svg width="16" height="12" viewBox="0 0 16 12"><path d="M2 10 8 3 14 10" fill="none" stroke="#e6e6e6" stroke-width="2"/></svg>
    <svg width="16" height="12" viewBox="0 0 16 12"><path d="M2 2 8 9 14 2" fill="none" stroke="#e6e6e6" stroke-width="2"/></svg>
    <svg width="14" height="16" viewBox="0 0 14 16"><path d="M0 2H14M0 8H14M0 14H14" stroke="#e6e6e6" stroke-width="2"/></svg>
  </div>
</div>

<div class="status d-flex align-items-center">
  <div class="fillb two">
    <div class="rowf"><b>Preencher:</b><span>N/A</span></div>
    <div class="rowf"><b>Traço:</b><span>N/A</span></div>
  </div>
  <span class="olab">O:</span>
  <div class="ospin"><span class="vv">100</span><span class="pm3"><span>−</span><span>+</span></span></div>
  <span class="laybar"></span>
  <span class="laynm">Camada 1</span>
  <span class="eyes"><svg class="ic" viewBox="0 0 20 20"><circle cx="10" cy="11" r="5.500" fill="none" stroke="#eee" stroke-width="2"/><circle cx="10" cy="11" r="2.200" fill="#eee"/><path d="M4 4 6.500 7M16 4 13.500 7M10 2.500V5" stroke="#eee" stroke-width="1.500"/></svg></span>
  <span class="lock2"><svg class="ic" viewBox="0 0 20 20"><rect x="4" y="9" width="11" height="9" fill="#eee"/><path d="M11 9V5.500a2.200 2.200 0 0 1 4.400 0V8" fill="none" stroke="#eee" stroke-width="2"/></svg></span>
  <div class="msg two">Nenhum objeto selecionado. Clicar, Shift+clicar, Alt+rodar (botão central do rato) por cima dos objetos, ou arrastar à volta dos<br>objetos para selecionar.</div>
  <div class="xy two">
    <div class="rowf"><span>X:</span><span>-140,39</span></div>
    <div class="rowf"><span>Y:</span><span>17,01</span></div>
  </div>
  <span class="alab">A:</span>
  <div class="zspin"><span class="vv">67%</span><span class="pm3"><span>−</span><span>+</span></span></div>
  <span class="rlab">R:</span>
  <div class="zspin rspin"><span class="vv">0,00°</span><span class="pm3"><span>−</span><span>+</span></span></div>
</div>

<div class="taskbar d-flex align-items-center">
  <svg width="25" height="24" viewBox="0 0 25 24"><path d="M0 3.500 10.500 2V11.500H0ZM12 1.800 25 0V11.500H12ZM0 12.800H10.500V22.300L0 20.800ZM12 12.800H25V24L12 22.300Z" fill="#000"/></svg>
  <div class="srch"><svg width="24" height="26" viewBox="0 0 24 26"><circle cx="14.500" cy="9.500" r="7.800" fill="none" stroke="#222" stroke-width="1.700"/><path d="M9 15 1.500 24.500" stroke="#222" stroke-width="1.700"/></svg><span>Procurar</span></div>
  <div class="tview"><svg width="24" height="26" viewBox="0 0 24 26"><path d="M1 1H15M1 5H15M1 9V16H15V9H1M1 25V22H15V25M19 2V5M19 10V13M19 18V25" fill="none" stroke="#222" stroke-width="1.400"/></svg></div>
  <div class="slots">
    <div class="tk"><svg width="36" height="42" viewBox="0 0 36 42"><rect x="0" y="0" width="36" height="42" rx="18" fill="#1f62e8"/><text x="18" y="24" text-anchor="middle" font-family="Roboto" font-size="10.500" font-weight="700" fill="#fff">zoom</text></svg></div>
    <div class="tk"><svg width="36" height="44" viewBox="0 0 36 44"><path d="M11 8V4a3 3 0 0 1 3-3H22a3 3 0 0 1 3 3V8" fill="none" stroke="#1f9bd1" stroke-width="2"/><path d="M2 8H34L36 41a3 3 0 0 1-3 3H3a3 3 0 0 1-3-3Z" fill="#14507e"/><rect x="11" y="16" width="7" height="7" fill="#e8503a"/><rect x="19" y="16" width="7" height="7" fill="#7ab92e"/><rect x="11" y="24" width="7" height="7" fill="#1f9bd1"/><rect x="19" y="24" width="7" height="7" fill="#f5b81f"/></svg></div>
    <div class="tk"><svg width="32" height="42" viewBox="0 0 32 42"><rect x="10" y="4" width="22" height="32" fill="#fff" stroke="#2b579a"/><path d="M18 10H29M18 15H29M18 20H29M18 25H29M18 30H29" stroke="#2b579a" stroke-width="1.800"/><path d="M0 4 19 0V42L0 38Z" fill="#2b579a"/><text x="9.500" y="27" text-anchor="middle" font-family="Roboto" font-size="16" font-weight="700" fill="#fff">W</text></svg></div>
    <div class="tk tk-line"><svg width="38" height="42" viewBox="0 0 38 42"><defs><linearGradient id="e1" x1=".8" y1="0" x2=".3" y2="1"><stop offset="0" stop-color="#4fd865"/><stop offset=".55" stop-color="#1fb5c9"/><stop offset="1" stop-color="#0f62b5"/></linearGradient></defs><circle cx="19" cy="21" r="18.500" fill="url(#e1)"/><path d="M1 20C1 9 9 2.500 19 2.500C27 2.500 31 7 30 9C25 6 11 6 8 16C6 24 12 35 24 39C12 41 1 33 1 20Z" fill="#0e6aa8"/><ellipse cx="24" cy="23" rx="10" ry="7" fill="#d5e3eb"/><path d="M13 22C13 15 21 12 27 15C20 15 16 19 17 25C18 30 24 33 30 32C24 36 13 33 13 22Z" fill="#0b56a0"/></svg></div>
    <div class="tk"><svg width="32" height="44" viewBox="0 0 32 44"><rect x="12" y="6" width="20" height="32" fill="#fff" stroke="#d24726"/><circle cx="23" cy="16" r="5.500" fill="#d24726"/><path d="M17 27H29M17 32H29" stroke="#d24726" stroke-width="2"/><path d="M0 4 20 0V44L0 40Z" fill="#d24726"/><text x="9.500" y="28" text-anchor="middle" font-family="Roboto" font-size="17" font-weight="700" fill="#fff">P</text></svg></div>
    <div class="tk"><svg width="34" height="44" viewBox="0 0 34 44"><path d="M13 1H21L31 37H3Z" fill="#ef8a12"/><path d="M10.500 12H23.500L25 18H9ZM7.500 24H26.500L28 30H6Z" fill="#f6f1e6"/><path d="M1 36H33V41L28 44H6L1 41Z" fill="#e07a0c"/></svg></div>
    <div class="tk"><svg width="36" height="44" viewBox="0 0 36 44"><rect width="36" height="44" fill="#1739a6"/><path d="M13 8H21V30H32V37H13Z" fill="#fff"/></svg><span class="cnt cntL">1</span></div>
    <div class="tk tk-line"><svg width="34" height="42" viewBox="0 0 34 42"><path d="M1 1H16L19 5H33V41H1Z" fill="#f2b92d"/><path d="M1 12H33V41H1Z" fill="#fdd35b"/><path d="M7 26H27V41H21V32H13V41H7Z" fill="#2a7fd0"/></svg></div>
    <div class="tk"><svg width="36" height="44" viewBox="0 0 36 44"><path d="M18 0 36 17V44H0V17Z" fill="#1479c7"/><path d="M0 17 18 35 36 17V44H0Z" fill="#33a3e3"/><path d="M6 20H30L18 33Z" fill="#fff"/></svg></div>
    <div class="tk"><svg width="32" height="42" viewBox="0 0 32 42"><rect x="10" y="4" width="22" height="32" fill="#fff" stroke="#217346"/><path d="M19 10H30M19 16H30M19 22H30M19 28H30M24 5V35" stroke="#217346" stroke-width="1.500"/><path d="M0 4 19 0V42L0 38Z" fill="#217346"/><text x="9.500" y="27" text-anchor="middle" font-family="Roboto" font-size="15" font-weight="700" fill="#fff">X</text></svg></div>
    <div class="tk tk-line"><svg width="34" height="44" viewBox="0 0 34 44"><ellipse cx="17" cy="22" rx="16" ry="22" fill="#f5b400"/><path d="M17 0C26 0 33 10 33 22C33 28 31 33 28 38C30 20 24 8 17 6C10 8 4 18 6 30C3 26 1 16 4 9C7 3 12 0 17 0Z" fill="#e8372c"/><path d="M4 32C8 40 14 44 20 43C14 42 8 36 6 28Z" fill="#1e7be0"/><ellipse cx="17" cy="23" rx="10" ry="15" fill="#fff"/><circle cx="17" cy="19" r="3" fill="#10345e"/><path d="M16 20H18L19 29H15Z" fill="#10345e"/></svg></div>
    <div class="tk tk-on tk-line"><svg width="36" height="44" viewBox="0 0 36 44"><rect width="36" height="44" fill="#0cb2bd"/><path d="M18 7 27 19 24 20 27 25 22 26 21 35 18 30 15 37 14 27 9 25 12 20 9 19Z" fill="#111"/><path d="M18 7 22 12 18 14 14 12Z" fill="#eee"/></svg></div>
  </div>
  <div class="wth"><svg width="30" height="40" viewBox="0 0 30 40"><defs><radialGradient id="w1" cx=".4" cy=".3" r=".8"><stop offset="0" stop-color="#ffc13a"/><stop offset="1" stop-color="#ee6a1f"/></radialGradient></defs><ellipse cx="15" cy="20" rx="15" ry="19" fill="url(#w1)"/></svg><span class="wthb">1</span></div>
  <span class="temp">20°C</span>
  <span class="upc"><svg class="ic" viewBox="0 0 20 20"><path d="M2 15 10 6 18 15" fill="none" stroke="#222" stroke-width="1.300"/></svg></span>
  <span class="por">POR</span>
  <div class="clk">10:15<br>19/09/2024</div>
  <div class="ntf"><svg width="24" height="32" viewBox="0 0 24 32"><path d="M0 0H24V22H12L8 30 7 22H0Z" fill="#000"/><path d="M5 6H19M5 11H19M5 16H19" stroke="#fff" stroke-width="1.500"/></svg><span class="cnt">7</span></div>
  <span class="edge"></span>
</div>

<script>
(function(){
  var pal="#000000 #1a1a1a #333333 #4d4d4d #666666 #808080 #999999 #b3b3b3 #cccccc #e6e6e6 #ececec #f2f2f2 #f9f9f9 #ffffff #800000 #ff0000 #808000 #ffff00 #008000 #00ff00 #008080 #00ffff #000080 #0000ff #800080 #ff00ff #2b0000 #550000 #800000 #aa0000 #d40000 #ff0000 #ff2a2a #ff5555 #ff8080 #ffaaaa #ffd5d5 #280b0b #501616 #782121 #a02c2c #c83737 #d35f5f #de8787 #e9afaf #f4d7d7 #241c1c #483737 #6c5353 #916f6f #ac9393 #c8b7b7 #e3dbdb #2b1100 #552200 #803300 #aa4400 #d45500 #ff6600 #ff7f2a #ff9955 #ffb380 #ffccaa #ffe6d5 #28170b #502d16 #784421 #a05a2c #c87137 #d38d5f #deaa87 #e9c6af #f4e3d7 #241f1c #483e37 #6c5d53 #917c6f #ac9d93 #c8beb7 #e3dedb #2b2200 #554400 #806600 #aa8800 #d4aa00 #ffcc00 #ffd42a #ffdd55 #ffe680 #ffeeaa #fff6d5 #28220b #504416 #786721 #a0892c #c8ab37 #d3bc5f #decd87 #e9ddaf #f4eed7 #24221c #484537 #6c6753 #918a6f #aca793 #c8c4b7".split(" ");
  var sw=document.getElementById("swatches");
  pal.forEach(function(c){var d=document.createElement("div");d.className="swatch";d.style.background=c;sw.appendChild(d);});
  var ppm=2.52,s='<rect x="64" y="114" width="1284" height="29" fill="#363636"/><rect x="429" y="114" width="531" height="29" fill="#1c1c1c"/>',mm,x,h;
  for(mm=-142.5;mm<354;mm+=2.5){
    x=Math.round(429+mm*ppm)+.5;
    var big=(mm%25===0),mid=(mm%12.5===0),five=(mm%5===0);
    h=big?23:mid?10:five?7:4;
    if(x<1323)s+='<path d="M'+x+' 143V'+(143-h)+'" stroke="#d8d8d8"/>';
    if(big&&x<1323)s+='<text x="'+(x+3)+'" y="134" font-family="Roboto" font-size="14" fill="#d8d8d8">'+mm+'</text>';
  }
  s+='<rect x="1323" y="114" width="25" height="29" fill="#363636"/><path d="M67 138H77L72 143Z" fill="#eee"/>';
  document.getElementById("rtop").innerHTML=s;
  var t='<rect x="36" y="143" width="28" height="772" fill="#363636"/><rect x="36" y="193" width="28" height="722" fill="#1c1c1c"/>',y;
  for(mm=-20;mm<290;mm+=2.5){
    y=Math.round(193.5+mm*ppm)+.5;
    var b2=(mm%25===0),m2=(mm%12.5===0),f2=(mm%5===0);
    h=b2?22:m2?10:f2?7:5;
    if(y>143&&y<915)t+='<path d="M64 '+y+'H'+(64-h)+'" stroke="#d8d8d8"/>';
    if(b2&&mm>=0&&y<915)t+='<text transform="translate(54 '+(y+3)+') rotate(-90)" text-anchor="end" font-family="Roboto" font-size="14" fill="#d8d8d8">'+mm+'</text>';
  }
  t+='<path d="M59 195V205L64 200Z" fill="#eee"/>';
  document.getElementById("rleft").innerHTML=t;
})();
</script>
</body>
</html>
